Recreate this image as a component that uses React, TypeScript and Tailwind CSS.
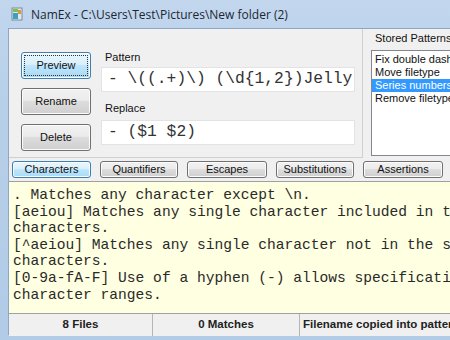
import React from "react";

const btn =
  "flex items-center justify-center rounded-[3px] border border-[#707070] bg-[linear-gradient(#f2f2f2_0%,#ebebeb_45%,#dddddd_50%,#cfcfcf_100%)] text-[#111] shadow-[inset_0_0_0_1px_#fcfcfc]";
const btnActive =
  "flex items-center justify-center rounded-[3px] border border-[#3c7fb1] bg-[linear-gradient(#eaf6fd_0%,#d9f0fc_45%,#bee6fd_50%,#a7d9f5_100%)] text-[#111] shadow-[inset_0_0_0_1px_#fcfcfc]";

const sans = { fontFamily: '"Liberation Sans", Arial, sans-serif' };
const mono = { fontFamily: '"Liberation Mono", "Courier New", monospace' };

export default function App() {
  const lines = [
    ". Matches any character except \\n.",
    "[aeiou] Matches any single character included in the specified set of",
    "characters.",
    "[^aeiou] Matches any single character not in the specified set of",
    "characters.",
    "[0-9a-fA-F] Use of a hyphen (-) allows specification of contiguous",
    "character ranges.",
  ];
  return (
    <div className="relative w-[450px] h-[340px] overflow-hidden bg-[linear-gradient(180deg,#c2d7ee_0%,#b7cfe9_30%,#b2cbe6_100%)] flex flex-col">
      {/* title bar */}
      <div className="h-[28px] flex items-center pl-[11px] gap-[7px] shrink-0">
        <svg width="13" height="14" viewBox="0 0 13 14">
          <rect x="1" y="1" width="10" height="12" fill="#dfe7ec" stroke="#7c8c98" strokeWidth="1" />
          <rect x="2" y="6" width="5" height="6" fill="#3aa0c6" />
          <rect x="7" y="3" width="3" height="4" fill="#d79a35" />
          <rect x="2" y="2" width="5" height="3" fill="#7fbf4a" />
        </svg>
        <span className="text-[12px] text-[#1c2733] mt-[1px]" style={{ fontFamily: '"Open Sans", "Noto Sans", sans-serif' }}>
          NamEx - C:\Users\Test\Pictures\New folder (2)
        </span>
      </div>
      <div className="flex flex-1 pl-[8px] min-h-0">
        <div className="flex-1 flex flex-col bg-[#f0f0f0] min-w-0 border-l border-t border-[#8ea6bf]" style={sans}>
          {/* top section */}
          <div className="h-[129px] flex shrink-0">
            <div className="w-[354px] shrink-0 border-r border-b border-[#d0d0d0] flex pl-[12px] pt-[22px] gap-[10px]">
              <div className="flex flex-col w-[70px] gap-[9px] mt-[1px]">
                <div className={btnActive + " h-[27px] relative text-[11px]"}>
                  <div className="absolute inset-[2px] border border-dotted border-[#333] rounded-[1px]" />
                  Preview
                </div>
                <div className={btn + " h-[27px] text-[11px]"}>Rename</div>
                <div className={btn + " h-[27px] text-[11px]"}>Delete</div>
              </div>
              <div className="flex flex-col w-[254px]">
                <div className="text-[11px] text-[#111] ml-[4px] leading-[13px]">Pattern</div>
                <div className="mt-[3px] h-[25px] bg-white border border-[#e3e3e3] flex items-center pl-[6px] overflow-hidden whitespace-nowrap text-[16.3px] text-[#333]" style={mono}>
                  - \((.+)\) (\d{"{"}1,2{"}"})Jelly
                </div>
                <div className="text-[11px] text-[#111] mt-[10px] ml-[4px] leading-[13px]">Replace</div>
                <div className="mt-[5px] h-[25px] bg-white border border-[#e3e3e3] flex items-center pl-[6px] whitespace-nowrap text-[16.3px] text-[#333]" style={mono}>
                  - ($1 $2)
                </div>
              </div>
            </div>
            <div className="flex-1 flex flex-col pl-[8px] pt-[2px] min-w-0">
              <div className="text-[11px] text-[#111] pl-[4px] leading-[14px] whitespace-nowrap">Stored Patterns</div>
              <div className="mt-[5px] h-[106px] bg-white border border-[#828790] border-r-0 pt-[2px] text-[11px] leading-[13px] text-[#111] whitespace-nowrap overflow-hidden">
                <div className="pl-[3px]">Fix double dash</div>
                <div className="pl-[3px]">Move filetype</div>
                <div className="pl-[3px] bg-[#3399ff] text-white">Series numbers d</div>
                <div className="pl-[3px]">Remove filetype</div>
              </div>
            </div>
          </div>
          {/* tab buttons */}
          <div className="h-[23px] flex items-center pl-[3px] gap-[9px] shrink-0">
            <div className={btnActive + " w-[79px] shrink-0 h-[17px] text-[11px]"}>Characters</div>
            <div className={btn + " w-[78px] shrink-0 h-[17px] text-[11px]"}>Quantifiers</div>
            <div className={btn + " w-[80px] shrink-0 h-[17px] text-[11px]"}>Escapes</div>
            <div className={btn + " w-[78px] shrink-0 h-[17px] text-[11px]"}>Substitutions</div>
            <div className={btn + " w-[80px] shrink-0 h-[17px] text-[11px]"}>Assertions</div>
          </div>
          {/* description */}
          <div className="h-[132px] shrink-0 bg-[#ffffe1] border-t border-[#a0a0a0] pl-[4px] pt-[5px] overflow-hidden text-[14.6px] leading-[16.6px] text-[#2a2a2a] whitespace-pre" style={mono}>
            {lines.map((l, i) => (
              <div key={i}>{l}</div>
            ))}
          </div>
          {/* status bar */}
          <div className="h-[23px] shrink-0 flex border-t border-[#a0a0a0] bg-[#f0f0f0] text-[11.5px] font-bold text-[#222] whitespace-nowrap overflow-hidden">
            <div className="w-[144px] shrink-0 flex items-center justify-center border-r border-[#b5b5b5]">8 Files</div>
            <div className="w-[147px] shrink-0 flex items-center justify-center border-r border-[#b5b5b5]">0 Matches</div>
            <div className="flex-1 flex items-center pl-[3px]">Filename copied into pattern</div>
          </div>
        </div>
      </div>
      <div className="h-[5px] shrink-0" />
    </div>
  );
}
